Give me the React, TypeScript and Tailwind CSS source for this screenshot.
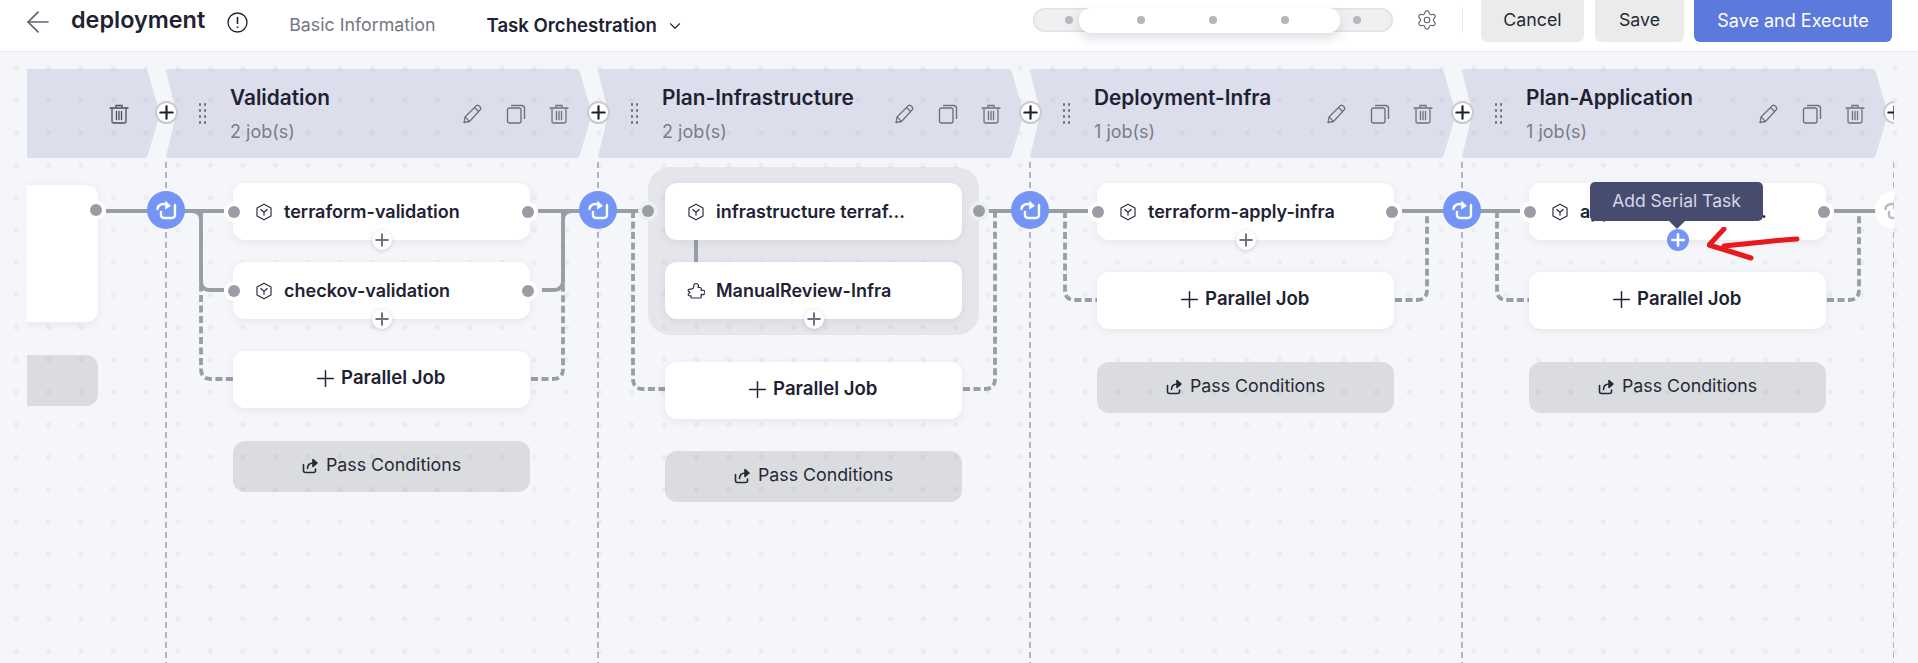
import { Plus, ChevronDown, ArrowLeft, Settings } from "lucide-react";

const font = "font-['Inter','Noto_Sans',sans-serif]";

function Pencil() {
  return (
    <svg width="22" height="22" viewBox="0 0 22 22" fill="none" stroke="#6f717e" strokeWidth="1.3" strokeLinejoin="round">
      <path d="M3 19.5l1-5.5L15.5 2.5a1.4 1.4 0 0 1 2 0l2 2a1.4 1.4 0 0 1 0 2L8.5 18.5z" />
      <path d="M13.5 4.5l4 4M4 14l4.5 4.5" />
    </svg>
  );
}

function CopyIcon() {
  return (
    <svg width="20" height="20" viewBox="0 0 20 20" fill="none" stroke="#6f717e" strokeWidth="1.4" strokeLinejoin="round">
      <rect x="1.5" y="4" width="13.5" height="15" rx="2" />
      <path d="M5 1.5h10.5a3 3 0 0 1 3 3V15" />
    </svg>
  );
}

function TrashIcon({ dark }: { dark?: boolean }) {
  return (
    <svg width="20" height="20" viewBox="0 0 20 20" fill="none" stroke={dark ? "#4c4f5e" : "#6f717e"} strokeWidth="1.3" strokeLinecap="round">
      <path d="M1 4h18M7 4V1.5h6V4M3 4v13.5a1.5 1.5 0 0 0 1.5 1.5h11a1.5 1.5 0 0 0 1.5-1.5V4M7.5 7.5v8M10 7.5v8M12.5 7.5v8" />
    </svg>
  );
}

function CubeIcon() {
  return (
    <svg width="18" height="18" viewBox="0 0 18 18" fill="none" stroke="#2b2e40" strokeWidth="1.2" strokeLinejoin="round">
      <path d="M9 1.2l7 3.9v7.8l-7 3.9-7-3.9V5.1z" />
      <path d="M5.5 6.2L9 9.2l3.5-3M9 9.2v3.6" />
    </svg>
  );
}

function ManualIcon() {
  return (
    <svg width="18" height="18" viewBox="0 0 18 18" fill="none" stroke="#2b2e40" strokeWidth="1.2" strokeLinejoin="round">
      <path d="M9 1.5a2.4 2.4 0 0 1 2.3 3.2l-.3.8h2.2c.6 0 1 .4 1 1v2l.8-.3a2.3 2.3 0 1 1 0 4.4l-.8-.3V15c0 .6-.4 1-1 1H5c-.6 0-1-.4-1-1v-1.2l-2-.2c-.8-.2-1.1-1.1-.6-1.7L3 10.5 1.4 9c-.5-.6-.2-1.5.6-1.7L6 6.6l.8-2A2.4 2.4 0 0 1 9 1.5z" />
    </svg>
  );
}

function PassIcon() {
  return (
    <svg width="16" height="16" viewBox="0 0 16 16" fill="none" stroke="#262938" strokeWidth="1.6" strokeLinecap="round" strokeLinejoin="round">
      <path d="M1.5 6.5v6a2 2 0 0 0 2 2h8a2 2 0 0 0 2-2v-1.5" />
      <path d="M5.5 10.5c0-3.5 2.5-5.5 6-5.5" />
      <path d="M11 1.5L15 5l-4 3.5z" fill="#262938" />
    </svg>
  );
}

function SpinNode({ blank }: { blank?: boolean }) {
  const c = blank ? "#b8bac2" : "#ffffff";
  return (
    <div className={`absolute left-[-19px] top-[139px] z-20 flex h-[38px] w-[38px] items-center justify-center rounded-full ${blank ? "bg-white" : "bg-[#7295f6]"}`}>
      <svg width="24" height="24" viewBox="0 0 24 24" fill="none" stroke={c} strokeWidth="2.4" strokeLinecap="round" strokeLinejoin="round">
        <path d="M3.5 11C4 7 8 5 12 6.5" />
        <path d="M11.5 2.5L17 8l-6 3.5z" fill={c} stroke="none" />
        <path d="M7 14v3a3.2 3.2 0 0 0 3.2 3h7.6a3.2 3.2 0 0 0 3.2-3V7" />
      </svg>
    </div>
  );
}

function BandPlus() {
  return (
    <div className="absolute left-[-11px] top-[32px] z-20 flex h-[23px] w-[23px] items-center justify-center rounded-full border-2 border-[#c9cbd3] bg-white">
      <Plus size={21} strokeWidth={2.5} color="#1c1f2e" className="shrink-0" />
    </div>
  );
}

function DragHandle() {
  return (
    <div className="grid w-[8px] shrink-0 grid-cols-2 gap-x-[2.5px] gap-y-[3.6px]">
      {[0, 1, 2, 3, 4, 5, 6, 7].map((i) => (
        <span key={i} className="h-[2.4px] w-[2.4px] rounded-full bg-[#6b6e7d]" />
      ))}
    </div>
  );
}

function Band({ title, jobs, trashOnly }: { title?: string; jobs?: string; trashOnly?: boolean }) {
  return (
    <div className={`relative mt-[17px] flex h-[89px] items-center ${trashOnly ? "pr-[37px]" : "pr-[29px]"}`}>
      <svg className="absolute left-0 top-0" width="432" height="89" viewBox="0 0 432 89">
        <path
          d="M3 0H410.5Q413 0 413.7 2.5L426 44.5L413.7 86.5Q413 89 410.5 89H3Q-0.5 89 0.3 86L10.5 44.5L0.3 3Q-0.5 0 3 0Z"
          fill="#4e5d9c"
          fillOpacity="0.15"
        />
      </svg>
      <BandPlus />
      {title && (
        <div className="relative ml-[33px] flex items-center">
          <DragHandle />
          <div className="ml-[23.5px] flex h-[89px] flex-col">
            <div className="mt-[14px] text-[20.8px] leading-[30px] font-semibold text-[#1e2233]">{title}</div>
            <div className="mt-[7px] text-[18px] leading-[24px] text-[#7a7d8a]">{jobs}</div>
          </div>
        </div>
      )}
      <div className="relative ml-auto flex items-center gap-[23px]">
        {!trashOnly && <Pencil />}
        {!trashOnly && <CopyIcon />}
        <TrashIcon dark={trashOnly} />
      </div>
    </div>
  );
}

function SerialPlus() {
  return (
    <div className="absolute bottom-[-10px] left-1/2 z-10 flex h-[20px] w-[20px] -translate-x-1/2 items-center justify-center rounded-full bg-white shadow-[0_1px_4px_rgba(40,50,90,0.2)]">
      <Plus size={20} strokeWidth={2.4} color="#6f7280" className="shrink-0" />
    </div>
  );
}

function SideDots() {
  return (
    <>
      <div className="absolute left-[-9px] top-1/2 z-10 flex h-[20px] w-[20px] -translate-y-1/2 items-center justify-center rounded-full bg-white">
        <span className="h-[12px] w-[12px] rounded-full bg-[#9a9da6]" />
      </div>
      <div className="absolute right-[-8px] top-1/2 z-10 flex h-[20px] w-[20px] -translate-y-1/2 items-center justify-center rounded-full bg-white">
        <span className="h-[12px] w-[12px] rounded-full bg-[#9a9da6]" />
      </div>
    </>
  );
}

function JobCard({ name, manual, plus = true, dots = true, className = "" }: { name: string; manual?: boolean; plus?: boolean; dots?: boolean; className?: string }) {
  return (
    <div className={`relative flex h-[57px] w-[297px] items-center rounded-[12px] bg-white pl-[22px] shadow-[0_2px_8px_rgba(40,50,90,0.08)] ${className}`}>
      {dots && <SideDots />}
      {manual ? <ManualIcon /> : <CubeIcon />}
      <span className="ml-[11px] text-[18px] font-semibold text-[#1e2233]">{name}</span>
      {plus && <SerialPlus />}
    </div>
  );
}

function ParallelJob({ className = "" }: { className?: string }) {
  return (
    <div className={`flex h-[57px] w-[297px] items-center justify-center gap-[2.5px] rounded-[12px] bg-white pb-[3px] shadow-[0_2px_8px_rgba(40,50,90,0.08)] ${className}`}>
      <Plus size={27} strokeWidth={1.3} color="#1e2233" className="-ml-[6px] shrink-0" />
      <span className="text-[18.6px] font-semibold text-[#1e2233]">Parallel Job</span>
    </div>
  );
}

function PassConditions({ className = "" }: { className?: string }) {
  return (
    <div className={`flex h-[51px] w-[297px] items-center justify-center gap-[8px] rounded-[12px] bg-[#1e2233]/12 pb-[2px] text-[17.8px] text-[#262938] ${className}`}>
      <PassIcon />
      <span>Pass Conditions</span>
    </div>
  );
}

const line = "#9a9da6";

// connectors for one stage, y measured from the top of the canvas (page y - 52)
function Wires({ rows = [159], parallelY, grouped }: { rows?: number[]; parallelY?: number; grouped?: boolean }) {
  const y0 = rows[0];
  return (
    <svg className="pointer-events-none absolute left-0 top-0" width="432" height="611" fill="none" stroke={line} strokeWidth="3.8">
      <path d={grouped ? "M0 159H42" : "M0 159H58"} />
      <path d={grouped ? "M390 159H432" : "M372 159H432"} />
      {rows.length > 1 && <path d={`M18 ${y0}H26Q35 ${y0} 35 ${y0 + 9}V${rows[1] - 9}Q35 ${rows[1]} 44 ${rows[1]}H58`} />}
      {rows.length > 1 && <path d={`M376 ${rows[1]}H387Q397 ${rows[1]} 397 ${rows[1] - 9}V${y0 + 9}Q397 ${y0} 406 ${y0}H414`} />}
      {parallelY !== undefined && (
        <path d={`M35 ${y0}V${parallelY - 10}Q35 ${parallelY} 45 ${parallelY}H68`} strokeDasharray="7 3.5" />
      )}
      {parallelY !== undefined && (
        <path d={`M365 ${parallelY}H387Q397 ${parallelY} 397 ${parallelY - 10}V${y0}`} strokeDasharray="7 3.5" />
      )}
    </svg>
  );
}

function Divider() {
  return (
    <svg className="pointer-events-none absolute left-[-1px] top-[110px]" width="2" height="501" fill="none" stroke="#b3b5bb" strokeWidth="2">
      <path d="M1 0V501" strokeDasharray="6 4" />
    </svg>
  );
}

function Header() {
  return (
    <div className="flex h-[52px] shrink-0 items-start border-b border-[#e9eaee] bg-white">
      <ArrowLeft size={34} strokeWidth={1.2} color="#5e6170" className="ml-[20.5px] mt-[5px]" />
      <span className="ml-[16.5px] mt-[5px] text-[23.4px] leading-[30px] font-semibold text-[#1e2233]">deployment</span>
      <svg className="ml-[22px] mt-[12px]" width="21" height="21" viewBox="0 0 21 21" fill="none" stroke="#1e2233" strokeWidth="1.3">
        <circle cx="10.5" cy="10.5" r="9.5" />
        <path d="M10.5 5v7M10.5 14.5v1.5" strokeWidth="1.6" />
      </svg>
      <span className="ml-[41px] mt-[12px] text-[17.8px] leading-[26px] text-[#73767f]">Basic Information</span>
      <span className="ml-[51px] mt-[12px] text-[18.6px] leading-[26px] font-semibold text-[#1e2233]">Task Orchestration</span>
      <ChevronDown size={18} strokeWidth={1.5} color="#1e2233" className="ml-[9px] mt-[17px]" />
      <div className="ml-auto flex items-start pr-[26px]">
        <div className="relative mt-[8px] flex h-[24px] w-[360px] items-center justify-between rounded-full bg-[#f0f0f2] pl-[32px] pr-[32px] shadow-[inset_0_0_3px_rgba(0,0,0,0.18)]">
          <div className="absolute left-[46px] top-0 h-[25px] w-[261px] rounded-[12px] bg-white shadow-[0_5px_12px_rgba(40,50,90,0.16)]" />
          {[0, 1, 2, 3, 4].map((i) => (
            <span key={i} className="relative h-[8px] w-[8px] rounded-full bg-[#b5b7bd]" />
          ))}
        </div>
        <Settings size={22} strokeWidth={1.25} color="#5e6170" className="ml-[23px] mt-[9px]" />
        <div className="ml-[24px] mt-[7px] h-[26px] w-px bg-[#e6e8f0]" />
        <button className="ml-[18px] h-[42px] w-[103px] rounded-b-[6px] bg-[#ebebeb] pb-[2px] text-[17.8px] text-[#262938]">Cancel</button>
        <button className="ml-[11px] h-[42px] w-[89px] rounded-b-[6px] bg-[#ebebeb] pb-[2px] text-[17.8px] text-[#262938]">Save</button>
        <button className="ml-[10px] h-[42px] w-[198px] rounded-b-[6px] bg-[#5c7ade] pb-[2px] text-[18px] text-white">Save and Execute</button>
      </div>
    </div>
  );
}

export default function App() {
  return (
    <div className={`flex h-[663px] w-[1918px] flex-col overflow-hidden bg-[#f5f6f9] ${font}`}>
      <Header />
      <div className="flex-1 bg-[radial-gradient(circle,#ebecf0_2.4px,transparent_2.6px)] bg-[size:32.4px_32.4px]">
        <div className="ml-[27px] h-full w-[1866.5px] overflow-hidden">
          <div className="ml-[-293.5px] flex h-full">
            {/* previous stage, mostly scrolled out */}
            <div className="relative w-[432px] shrink-0">
              <Divider />
              <Wires />
              <Band trashOnly />
              <div className="relative ml-[67.5px] mt-[27px] h-[137px] w-[297px] rounded-[12px] bg-white shadow-[0_2px_8px_rgba(40,50,90,0.08)]">
                <div className="absolute right-[-8px] top-[15px] z-10 flex h-[20px] w-[20px] items-center justify-center rounded-full bg-white">
                  <span className="h-[12px] w-[12px] rounded-full bg-[#9a9da6]" />
                </div>
              </div>
              <div className="ml-[67.5px] mt-[33px] h-[51px] w-[297px] rounded-[12px] bg-[#1e2233]/12" />
            </div>

            <div className="relative w-[432px] shrink-0">
              <Divider />
              <Wires rows={[159, 238]} parallelY={327} />
              <SpinNode />
              <Band title="Validation" jobs="2 job(s)" />
              <div className="relative ml-[67.5px] mt-[25px] flex flex-col">
                <JobCard name="terraform-validation" />
                <JobCard name="checkov-validation" className="mt-[22px]" />
                <ParallelJob className="mt-[32px]" />
                <PassConditions className="mt-[33px]" />
              </div>
            </div>

            <div className="relative w-[432px] shrink-0">
              <Divider />
              <Wires parallelY={337} grouped />
              <SpinNode />
              <Band title="Plan-Infrastructure" jobs="2 job(s)" />
              <div className="relative ml-[50.5px] mt-[9px] flex w-[331px] flex-col items-center rounded-[22px] bg-[#1e2233]/7 pb-[16px] pt-[16px]">
                <div className="absolute left-[-10px] top-[34px] z-10 flex h-[20px] w-[20px] items-center justify-center rounded-full bg-[#eeeff2]">
                  <span className="h-[12px] w-[12px] rounded-full bg-[#9a9da6]" />
                </div>
                <div className="absolute right-[-10px] top-[34px] z-10 flex h-[20px] w-[20px] items-center justify-center rounded-full bg-[#eeeff2]">
                  <span className="h-[12px] w-[12px] rounded-full bg-[#9a9da6]" />
                </div>
                <JobCard name="infrastructure terraf..." plus={false} dots={false} />
                <div className="ml-[46px] h-[22px] w-[4px] self-start bg-[#9a9da6]" />
                <JobCard name="ManualReview-Infra" manual dots={false} />
              </div>
              <ParallelJob className="relative ml-[67.5px] mt-[27px]" />
              <PassConditions className="relative ml-[67.5px] mt-[32px]" />
            </div>

            <div className="relative w-[432px] shrink-0">
              <Divider />
              <Wires parallelY={248} />
              <SpinNode />
              <Band title="Deployment-Infra" jobs="1 job(s)" />
              <div className="relative ml-[67.5px] mt-[25px] flex flex-col">
                <JobCard name="terraform-apply-infra" />
                <ParallelJob className="mt-[32px]" />
                <PassConditions className="mt-[33px]" />
              </div>
            </div>

            <div className="relative w-[432px] shrink-0">
              <Divider />
              <Wires parallelY={248} />
              <SpinNode />
              <Band title="Plan-Application" jobs="1 job(s)" />
              <div className="relative ml-[67.5px] mt-[25px] flex flex-col">
                <div className="relative flex h-[57px] w-[297px] items-center rounded-[12px] bg-white pl-[22px] shadow-[0_2px_8px_rgba(40,50,90,0.08)]">
                  <SideDots />
                  <CubeIcon />
                  <span className="ml-[11px] text-[18px] font-semibold text-[#1e2233]">application-terrafor...</span>
                  <div className="absolute left-[61px] top-[-1px] z-30 flex h-[39px] w-[173px] items-center justify-center rounded-[5px] bg-[#474c6f] text-[17.5px] text-[#d5d8e6]">
                    Add Serial Task
                    <span className="absolute bottom-[-8px] left-1/2 h-0 w-0 -translate-x-1/2 border-x-[8px] border-t-[8px] border-x-transparent border-t-[#474c6f]" />
                  </div>
                  <div className="absolute bottom-[-11px] left-1/2 z-30 flex h-[22px] w-[22px] -translate-x-1/2 items-center justify-center rounded-full bg-[#7295f6]">
                    <Plus size={20} strokeWidth={3} color="#ffffff" className="shrink-0" />
                  </div>
                  <svg className="absolute left-[178px] top-[44px] z-40" width="96" height="36" viewBox="0 0 96 36" fill="none" stroke="#e8191c" strokeWidth="5" strokeLinecap="round" strokeLinejoin="round">
                    <path d="M90 12C70 13 40 17 17 19" />
                    <path d="M17 2L2 18L44 31" />
                  </svg>
                </div>
                <ParallelJob className="mt-[32px]" />
                <PassConditions className="mt-[33px]" />
              </div>
            </div>

            <div className="relative w-[432px] shrink-0">
              <Divider />
              <SpinNode blank />
              <Band />
            </div>
          </div>
        </div>
      </div>
    </div>
  );
}
